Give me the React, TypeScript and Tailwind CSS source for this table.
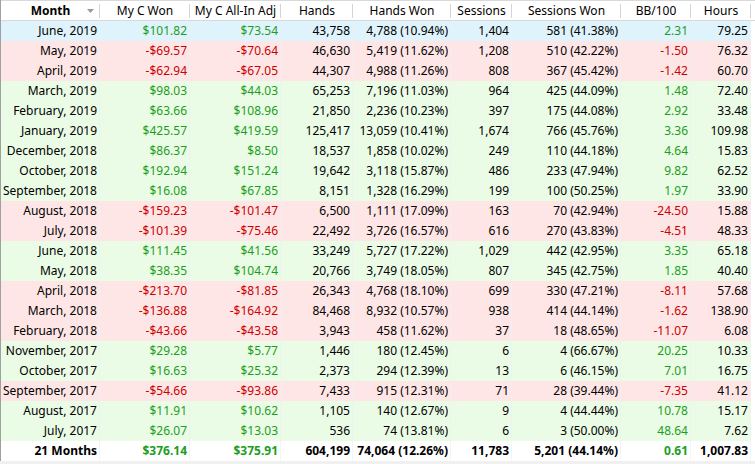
import React from "react";

type Row = {
  month: string;
  won: string;
  adj: string;
  hands: string;
  handsWon: string;
  sessions: string;
  sessionsWon: string;
  bb: string;
  hours: string;
};

const rows: Row[] = [
  { month: "June, 2019", won: "$101.82", adj: "$73.54", hands: "43,758", handsWon: "4,788 (10.94%)", sessions: "1,404", sessionsWon: "581 (41.38%)", bb: "2.31", hours: "79.25" },
  { month: "May, 2019", won: "-$69.57", adj: "-$70.64", hands: "46,630", handsWon: "5,419 (11.62%)", sessions: "1,208", sessionsWon: "510 (42.22%)", bb: "-1.50", hours: "76.32" },
  { month: "April, 2019", won: "-$62.94", adj: "-$67.05", hands: "44,307", handsWon: "4,988 (11.26%)", sessions: "808", sessionsWon: "367 (45.42%)", bb: "-1.42", hours: "60.70" },
  { month: "March, 2019", won: "$98.03", adj: "$44.03", hands: "65,253", handsWon: "7,196 (11.03%)", sessions: "964", sessionsWon: "425 (44.09%)", bb: "1.48", hours: "72.40" },
  { month: "February, 2019", won: "$63.66", adj: "$108.96", hands: "21,850", handsWon: "2,236 (10.23%)", sessions: "397", sessionsWon: "175 (44.08%)", bb: "2.92", hours: "33.48" },
  { month: "January, 2019", won: "$425.57", adj: "$419.59", hands: "125,417", handsWon: "13,059 (10.41%)", sessions: "1,674", sessionsWon: "766 (45.76%)", bb: "3.36", hours: "109.98" },
  { month: "December, 2018", won: "$86.37", adj: "$8.50", hands: "18,537", handsWon: "1,858 (10.02%)", sessions: "249", sessionsWon: "110 (44.18%)", bb: "4.64", hours: "15.83" },
  { month: "October, 2018", won: "$192.94", adj: "$151.24", hands: "19,642", handsWon: "3,118 (15.87%)", sessions: "486", sessionsWon: "233 (47.94%)", bb: "9.82", hours: "62.52" },
  { month: "September, 2018", won: "$16.08", adj: "$67.85", hands: "8,151", handsWon: "1,328 (16.29%)", sessions: "199", sessionsWon: "100 (50.25%)", bb: "1.97", hours: "33.90" },
  { month: "August, 2018", won: "-$159.23", adj: "-$101.47", hands: "6,500", handsWon: "1,111 (17.09%)", sessions: "163", sessionsWon: "70 (42.94%)", bb: "-24.50", hours: "15.88" },
  { month: "July, 2018", won: "-$101.39", adj: "-$75.46", hands: "22,492", handsWon: "3,726 (16.57%)", sessions: "616", sessionsWon: "270 (43.83%)", bb: "-4.51", hours: "48.33" },
  { month: "June, 2018", won: "$111.45", adj: "$41.56", hands: "33,249", handsWon: "5,727 (17.22%)", sessions: "1,029", sessionsWon: "442 (42.95%)", bb: "3.35", hours: "65.18" },
  { month: "May, 2018", won: "$38.35", adj: "$104.74", hands: "20,766", handsWon: "3,749 (18.05%)", sessions: "807", sessionsWon: "345 (42.75%)", bb: "1.85", hours: "40.40" },
  { month: "April, 2018", won: "-$213.70", adj: "-$81.85", hands: "26,343", handsWon: "4,768 (18.10%)", sessions: "699", sessionsWon: "330 (47.21%)", bb: "-8.11", hours: "57.68" },
  { month: "March, 2018", won: "-$136.88", adj: "-$164.92", hands: "84,468", handsWon: "8,932 (10.57%)", sessions: "938", sessionsWon: "414 (44.14%)", bb: "-1.62", hours: "138.90" },
  { month: "February, 2018", won: "-$43.66", adj: "-$43.58", hands: "3,943", handsWon: "458 (11.62%)", sessions: "37", sessionsWon: "18 (48.65%)", bb: "-11.07", hours: "6.08" },
  { month: "November, 2017", won: "$29.28", adj: "$5.77", hands: "1,446", handsWon: "180 (12.45%)", sessions: "6", sessionsWon: "4 (66.67%)", bb: "20.25", hours: "10.33" },
  { month: "October, 2017", won: "$16.63", adj: "$25.32", hands: "2,373", handsWon: "294 (12.39%)", sessions: "13", sessionsWon: "6 (46.15%)", bb: "7.01", hours: "16.75" },
  { month: "September, 2017", won: "-$54.66", adj: "-$93.86", hands: "7,433", handsWon: "915 (12.31%)", sessions: "71", sessionsWon: "28 (39.44%)", bb: "-7.35", hours: "41.12" },
  { month: "August, 2017", won: "$11.91", adj: "$10.62", hands: "1,105", handsWon: "140 (12.67%)", sessions: "9", sessionsWon: "4 (44.44%)", bb: "10.78", hours: "15.17" },
  { month: "July, 2017", won: "$26.07", adj: "$13.03", hands: "536", handsWon: "74 (13.81%)", sessions: "6", sessionsWon: "3 (50.00%)", bb: "48.64", hours: "7.62" },
];

const total: Row = {
  month: "21 Months",
  won: "$376.14",
  adj: "$375.91",
  hands: "604,199",
  handsWon: "74,064 (12.26%)",
  sessions: "11,783",
  sessionsWon: "5,201 (44.14%)",
  bb: "0.61",
  hours: "1,007.83",
};

const cols = "grid grid-cols-[99px_90px_91px_72px_98px_61px_109px_70px_60px_4px]";

const headers = ["Month", "My C Won", "My C All-In Adj", "Hands", "Hands Won", "Sessions", "Sessions Won", "BB/100", "Hours"];

function tone(v: string) {
  return v.startsWith("-") ? "text-[#cc0000]" : "text-[#1c9e1c]";
}

function Cell({ children, className = "" }: { children: React.ReactNode; className?: string }) {
  return (
    <div className={`flex h-5 items-center justify-end whitespace-nowrap border-r border-[#f0f0f0]/70 pr-[2px] ${className}`}>
      {children}
    </div>
  );
}

function DataRow({ row, bg, bold = false }: { row: Row; bg: string; bold?: boolean }) {
  return (
    <div className={`${cols} ${bg} ${bold ? "font-bold" : ""}`}>
      <Cell>{row.month}</Cell>
      <Cell className={tone(row.won)}>{row.won}</Cell>
      <Cell className={tone(row.adj)}>{row.adj}</Cell>
      <Cell>{row.hands}</Cell>
      <Cell>{row.handsWon}</Cell>
      <Cell>{row.sessions}</Cell>
      <Cell>{row.sessionsWon}</Cell>
      <Cell className={tone(row.bb)}>{row.bb}</Cell>
      <Cell>{row.hours}</Cell>
      <div className="bg-white" />
    </div>
  );
}

export default function App() {
  return (
    <div className="h-[464px] w-[755px] overflow-hidden bg-[#f0f0f0] font-['Noto_Sans','Open_Sans',sans-serif] text-[12px] leading-none text-black">
      <div className="border-l border-[#a0a0a0] bg-white">
        <div className={`${cols} h-[21px] border-y border-[#d9d9d9] bg-white`}>
          {headers.map((h, i) => (
            <div key={h} className="relative flex items-center justify-center">
              <span className={i === 0 ? "font-bold" : ""}>{h}</span>
              {i === 0 && (
                <svg className="absolute right-[6px] top-[8px]" width="7" height="4" viewBox="0 0 7 4">
                  <path d="M0 0h7L3.5 4z" fill="#9a9a9a" />
                </svg>
              )}
              <div className="absolute right-0 top-[3px] h-[14px] w-px bg-[#d5d5d5]" />
            </div>
          ))}
          <div />
        </div>
        {rows.map((r, i) => (
          <DataRow
            key={r.month}
            row={r}
            bg={i === 0 ? "bg-[#dff3fc]" : r.won.startsWith("-") ? "bg-[#ffe6e6]" : "bg-[#eafce6]"}
          />
        ))}
        <DataRow row={total} bg="bg-white" bold />
      </div>
    </div>
  );
}
